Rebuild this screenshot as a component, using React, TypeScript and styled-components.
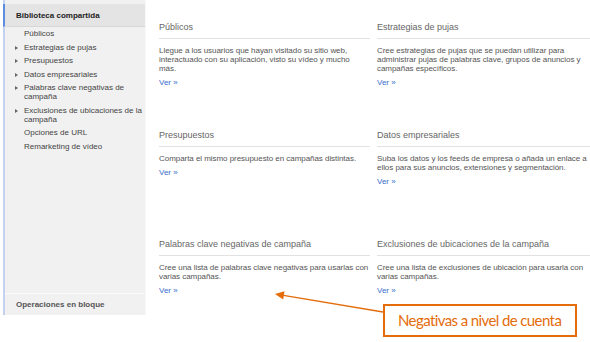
import styled, { createGlobalStyle } from "styled-components";

const GlobalStyle = createGlobalStyle`
    html, body {
        margin: 0;
        padding: 0;
        background: #ffffff;
    }
    body {
        font-family: "Liberation Sans", Arial, sans-serif;
        overflow: hidden;
    }
`;

const Page = styled.div`
    position: relative;
    display: flex;
    align-items: flex-start;
    width: 590px;
    height: 342px;
    overflow: hidden;
    background: #ffffff;
`;

const Sidebar = styled.div`
    display: flex;
    flex-direction: column;
    flex-shrink: 0;
    box-sizing: border-box;
    width: 143px;
    height: 315px;
    margin-left: 3px;
    border-left: 2px solid #c3d3ef;
    border-right: 1px solid #f8f8f8;
    background: #f1f1f1;
`;

const SideHeader = styled.div`
    display: flex;
    align-items: center;
    box-sizing: border-box;
    height: 23px;
    margin-top: 4px;
    margin-left: -2px;
    padding-left: 11px;
    border-left: 2px solid #5d8de0;
    border-bottom: 1px solid #d7d7d7;
    background: #e4e4e4;
    color: #222;
    font-size: 8px;
    font-weight: bold;
`;

const SideList = styled.ul`
    list-style: none;
    margin: 0;
    padding: 0;
`;

// labels carry their own line breaks, as in the original menu
const SideItem = styled.li<{ $arrow?: boolean }>`
    position: relative;
    padding: 2.25px 0 2.25px 19px;
    font-size: 8px;
    line-height: 9px;
    white-space: pre;
    color: #444;

    &::before {
        content: "";
        display: ${(p) => (p.$arrow ? "block" : "none")};
        position: absolute;
        left: 10px;
        top: 5px;
        border-left: 3px solid #666;
        border-top: 2px solid transparent;
        border-bottom: 2px solid transparent;
    }
`;

const SideSpacer = styled.div`
    flex: 1;
`;

const SideFooter = styled.div`
    display: flex;
    align-items: center;
    box-sizing: border-box;
    height: 22px;
    padding-left: 11px;
    border-top: 1px solid #fafafa;
    color: #555;
    font-size: 8px;
    font-weight: bold;
`;

const Main = styled.div`
    display: grid;
    grid-template-columns: 211px 215px;
    grid-auto-rows: 108.5px;
    column-gap: 7px;
    padding: 21.8px 0 0 13px;
`;

const Card = styled.div`
    display: flex;
    flex-direction: column;
`;

const CardTitle = styled.div`
    padding-bottom: 5px;
    border-bottom: 1px solid #e2e2e2;
    font-size: 9px;
    line-height: 11px;
    color: #666;
`;

const CardText = styled.div`
    margin-top: 7px;
    font-size: 8px;
    line-height: 9px;
    letter-spacing: -0.05px;
    white-space: pre;
    color: #555;
`;

const CardLink = styled.a`
    align-self: flex-start;
    margin-top: 5px;
    font-size: 8px;
    line-height: 9px;
    color: #3a6dcc;
    text-decoration: none;
`;

const Arrow = styled.svg`
    position: absolute;
    left: 270px;
    top: 288px;
    overflow: visible;
`;

const Callout = styled.div`
    position: absolute;
    left: 383px;
    top: 304px;
    box-sizing: border-box;
    width: 194px;
    height: 33px;
    padding: 0 0 2px 13px;
    display: flex;
    align-items: center;
    border: 2px solid #e46c0a;
    background: #ffffff;
    color: #e46c0a;
    font-family: Lato, "Open Sans", sans-serif;
    font-size: 15px;
    letter-spacing: -0.6px;
    white-space: nowrap;
`;

const menu = [
    { label: "Públicos", arrow: false },
    { label: "Estrategias de pujas", arrow: true },
    { label: "Presupuestos", arrow: true },
    { label: "Datos empresariales", arrow: true },
    { label: "Palabras clave negativas de\ncampaña", arrow: true },
    { label: "Exclusiones de ubicaciones de la\ncampaña", arrow: true },
    { label: "Opciones de URL", arrow: false },
    { label: "Remarketing de vídeo", arrow: false },
];

const cards = [
    {
        title: "Públicos",
        text: "Llegue a los usuarios que hayan visitado su sitio web,\ninteractuado con su aplicación, visto su vídeo y mucho\nmás.",
    },
    {
        title: "Estrategias de pujas",
        text: "Cree estrategias de pujas que se puedan utilizar para\nadministrar pujas de palabras clave, grupos de anuncios y\ncampañas específicos.",
    },
    {
        title: "Presupuestos",
        text: "Comparta el mismo presupuesto en campañas distintas.",
    },
    {
        title: "Datos empresariales",
        text: "Suba los datos y los feeds de empresa o añada un enlace a\nellos para sus anuncios, extensiones y segmentación.",
    },
    {
        title: "Palabras clave negativas de campaña",
        text: "Cree una lista de palabras clave negativas para usarlas con\nvarias campañas.",
    },
    {
        title: "Exclusiones de ubicaciones de la campaña",
        text: "Cree una lista de exclusiones de ubicación para usarla con\nvarias campañas.",
    },
];

export default function App() {
    return (
        <>
            <GlobalStyle />
            <Page>
                <Sidebar>
                    <SideHeader>Biblioteca compartida</SideHeader>
                    <SideList>
                        {menu.map((m) => (
                            <SideItem key={m.label} $arrow={m.arrow}>
                                {m.label}
                            </SideItem>
                        ))}
                    </SideList>
                    <SideSpacer />
                    <SideFooter>Operaciones en bloque</SideFooter>
                </Sidebar>
                <Main>
                    {cards.map((c) => (
                        <Card key={c.title}>
                            <CardTitle>{c.title}</CardTitle>
                            <CardText>{c.text}</CardText>
                            <CardLink href="#">Ver »</CardLink>
                        </Card>
                    ))}
                </Main>
                <Arrow width="115" height="28" viewBox="0 0 115 28">
                    <line x1="113" y1="24" x2="12" y2="7.2" stroke="#e46c0a" strokeWidth="1.3" />
                    <polygon points="5,6 14.5,3.3 13.2,11.6" fill="#e46c0a" />
                </Arrow>
                <Callout>Negativas a nivel de cuenta</Callout>
            </Page>
        </>
    );
}
